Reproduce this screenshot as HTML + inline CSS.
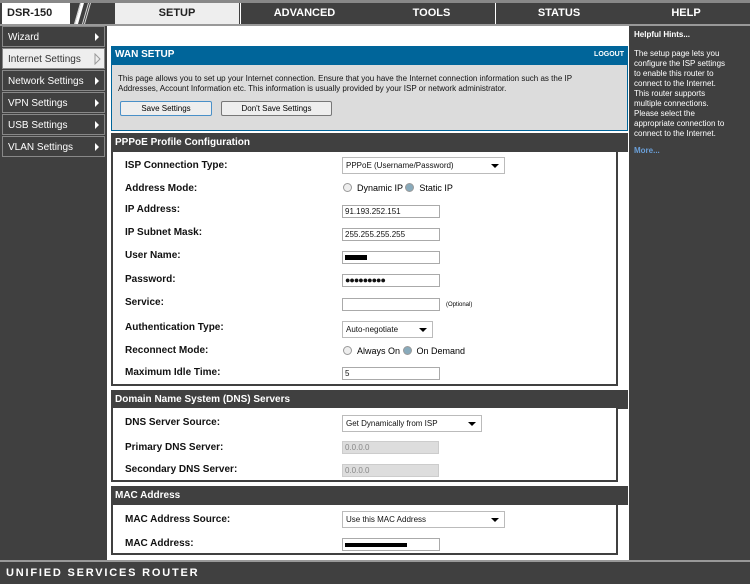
<!DOCTYPE html>
<html><head><style>
*{margin:0;padding:0;box-sizing:border-box}
body{width:750px;height:584px;background:#404040;font-family:"Liberation Sans",Tahoma,sans-serif;position:relative;overflow:hidden}
.a{position:absolute}
.tab{position:absolute;top:3px;height:21px;color:#fff;font-weight:bold;font-size:11px;text-align:center;line-height:21px}
.side{position:absolute;left:2px;width:103px;height:21px;background:#404040;color:#fff;font-size:10px;line-height:21px;padding-left:5px;border:1px solid #888}
.side:after{content:"";position:absolute;right:5px;top:6px;border-left:4px solid #fff;border-top:4px solid transparent;border-bottom:4px solid transparent}
.hdr{position:absolute;left:111px;width:517px;height:19px;background:#404040;color:#fff;font-weight:bold;font-size:10px;line-height:19px;padding-left:4px}
.box{position:absolute;left:111px;width:507px;background:#fff;border:2px solid #404040;border-top:none}
.lb{position:absolute;left:125px;font-weight:bold;font-size:10px;color:#111}
.in{position:absolute;left:342px;width:98px;height:13px;border:1px solid #aaa;background:#fff;font-size:8px;line-height:11px;padding-left:2px;color:#111}
.sel{position:absolute;left:342px;height:17px;border:1px solid #bbb;background:#fff;font-size:8px;line-height:15px;padding-left:3px;color:#111}
.sel:after{content:"";position:absolute;right:5px;top:6px;border-top:4px solid #000;border-left:4px solid transparent;border-right:4px solid transparent}
.dis{background:#ddd;color:#888;border-color:#ccc}
.rad{display:inline-block;width:9px;height:9px;border-radius:50%;border:1px solid #999;background:#eee;vertical-align:-1px;margin-right:5px}
</style></head><body>
<div class="a" style="left:0;top:0;width:750px;height:3px;background:#888"></div>
<div class="a" style="left:2px;top:3px;width:68px;height:21px;background:#fff;font-weight:bold;font-size:11px;line-height:21px;padding-left:5px;color:#222">DSR-150</div>
<svg class="a" style="left:70px;top:3px" width="44" height="21"><path d="M5 21L11 0H14L8 21Z" fill="#fff"/><path d="M74 0" /><path d="M12 21L18 0H19L13 21Z" fill="#ddd"/><path d="M14 21L20 0H21L15 21Z" fill="#ddd"/><path d="M4 21L10 0H11L5 21Z" fill="#ddd"/></svg>
<div class="tab" style="left:115px;width:124px;background:#eee;color:#222">SETUP</div>
<div class="a" style="left:240px;top:3px;width:1px;height:21px;background:#fff"></div>
<div class="tab" style="left:241px;width:127px">ADVANCED</div>
<div class="tab" style="left:369px;width:125px">TOOLS</div>
<div class="a" style="left:495px;top:3px;width:1px;height:21px;background:#fff"></div>
<div class="tab" style="left:496px;width:126px">STATUS</div>
<div class="tab" style="left:622px;width:128px">HELP</div>
<div class="a" style="left:0;top:24px;width:750px;height:2px;background:#999"></div>

<div class="side" style="top:26px">Wizard</div>
<div class="side" style="top:48px;background:#eee;color:#333">Internet Settings</div>
<svg class="a" style="left:94px;top:53px" width="8" height="12"><path d="M1 1L6 6L1 11Z" fill="#eee" stroke="#999"/></svg>
<div class="side" style="top:70px">Network Settings</div>
<div class="side" style="top:92px">VPN Settings</div>
<div class="side" style="top:114px">USB Settings</div>
<div class="side" style="top:136px">VLAN Settings</div>

<div class="a" style="left:107px;top:26px;width:522px;height:534px;background:#fff"></div>

<div class="a" style="left:111px;top:46px;width:517px;height:85px;background:#dcdcdc;border:1px solid #00659a"></div>
<div class="a" style="left:111px;top:46px;width:517px;height:19px;background:#00659a;color:#fff;font-weight:bold;font-size:10px;line-height:18px;padding-left:4px">WAN SETUP<span style="position:absolute;right:4px;font-size:7px">LOGOUT</span></div>
<div class="a" style="left:118px;top:74px;width:480px;font-size:8px;line-height:10px;color:#111">This page allows you to set up your Internet connection. Ensure that you have the Internet connection information such as the IP Addresses, Account Information etc. This information is usually provided by your ISP or network administrator.</div>
<div class="a" style="left:120px;top:101px;width:92px;height:15px;border:1px solid #4a90c8;border-radius:2px;background:#eee;font-size:8px;text-align:center;line-height:13px">Save Settings</div>
<div class="a" style="left:221px;top:101px;width:111px;height:15px;border:1px solid #777;border-radius:2px;background:#eee;font-size:8px;text-align:center;line-height:13px">Don't Save Settings</div>

<div class="hdr" style="top:133px">PPPoE Profile Configuration</div>
<div class="box" style="top:152px;height:234px"></div>
<div class="lb" style="top:160px">ISP Connection Type:</div><div class="sel" style="top:157px;width:163px">PPPoE (Username/Password)</div>
<div class="lb" style="top:183px">Address Mode:</div><div class="a" style="left:343px;top:183px;font-size:9px"><span class="rad"></span>Dynamic IP <span class="rad" style="background:#8ab"></span>Static IP</div>
<div class="lb" style="top:204px">IP Address:</div><div class="in" style="top:205px">91.193.252.151</div>
<div class="lb" style="top:227px">IP Subnet Mask:</div><div class="in" style="top:228px">255.255.255.255</div>
<div class="lb" style="top:250px">User Name:</div><div class="in" style="top:251px"><span style="display:inline-block;width:22px;height:5px;background:#000;vertical-align:middle"></span></div>
<div class="lb" style="top:274px">Password:</div><div class="in" style="top:274px;font-size:9px;letter-spacing:-1px">●●●●●●●●●</div>
<div class="lb" style="top:297px">Service:</div><div class="in" style="top:298px"></div><div class="a" style="left:446px;top:302px;font-size:6px">(Optional)</div>
<div class="lb" style="top:322px">Authentication Type:</div><div class="sel" style="top:321px;width:91px">Auto-negotiate</div>
<div class="lb" style="top:345px">Reconnect Mode:</div><div class="a" style="left:343px;top:346px;font-size:9px"><span class="rad"></span>Always On <span class="rad" style="background:#8ab"></span>On Demand</div>
<div class="lb" style="top:367px">Maximum Idle Time:</div><div class="in" style="top:367px">5</div>

<div class="hdr" style="top:390px">Domain Name System (DNS) Servers</div>
<div class="box" style="top:408px;height:74px"></div>
<div class="lb" style="top:417px">DNS Server Source:</div><div class="sel" style="top:415px;width:140px">Get Dynamically from ISP</div>
<div class="lb" style="top:442px">Primary DNS Server:</div><div class="in dis" style="top:441px;width:97px">0.0.0.0</div>
<div class="lb" style="top:464px">Secondary DNS Server:</div><div class="in dis" style="top:464px;width:97px">0.0.0.0</div>

<div class="hdr" style="top:486px">MAC Address</div>
<div class="box" style="top:505px;height:50px"></div>
<div class="lb" style="top:514px">MAC Address Source:</div><div class="sel" style="top:511px;width:163px">Use this MAC Address</div>
<div class="lb" style="top:538px">MAC Address:</div><div class="in" style="top:538px"><span style="display:inline-block;width:62px;height:4px;background:#000;vertical-align:middle"></span></div>

<div class="a" style="left:634px;top:30px;color:#fff;font-size:8px;font-weight:bold">Helpful Hints...</div>
<div class="a" style="left:634px;top:49px;width:96px;color:#fff;font-size:8px;line-height:10px">The setup page lets you configure the ISP settings to enable this router to connect to the Internet. This router supports multiple connections. Please select the appropriate connection to connect to the Internet.</div>
<div class="a" style="left:634px;top:146px;color:#6a9fd8;font-size:8px;font-weight:bold">More...</div>

<div class="a" style="left:0;top:560px;width:750px;height:2px;background:#999"></div>
<div class="a" style="left:6px;top:567px;color:#fff;font-size:11px;font-weight:bold;letter-spacing:1.8px">UNIFIED SERVICES ROUTER</div>
</body></html>
